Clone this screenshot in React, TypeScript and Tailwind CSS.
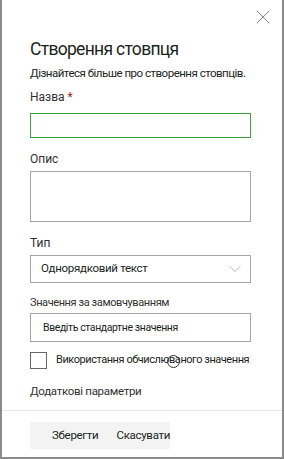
import { X, ChevronDown } from 'lucide-react'

const FONT = { fontFamily: 'Roboto, "Liberation Sans", Arial, sans-serif' }

export default function App() {
  return (
    <div
      className="w-[284px] h-[459px] bg-white border-l-2 border-r-2 border-b-2 border-[#8a8a8a] flex flex-col text-[#323130] whitespace-nowrap overflow-hidden"
      style={FONT}
    >
      <div className="flex justify-end pt-[5px] pr-[7px]">
        <X className="w-[24px] h-[24px] text-[#7a7a7a]" strokeWidth={0.9} />
      </div>

      <div className="pl-[28px] pr-[31px] flex flex-col">
        <h1 className="mt-[9px] text-[17.5px] leading-[22px] font-normal text-[#201f1e] tracking-[-0.7px]">
          Створення стовпця
        </h1>
        <p className="mt-[6px] text-[11.5px] leading-[14px] tracking-[-0.5px] text-[#201f1e]">
          Дізнайтеся більше про створення стовпців.
        </p>

        <label className="mt-[10px] text-[12px] leading-[15px]">
          Назва <span className="text-[#a4262c]">*</span>
        </label>
        <div className="mt-[8px] h-[25px] border border-[#3aa53e]" />

        <label className="mt-[14px] text-[12px] leading-[15px]">Опис</label>
        <div className="mt-[4px] h-[51px] border border-[#a6a6a6]" />

        <label className="mt-[14px] text-[12px] leading-[15px]">Тип</label>
        <div className="mt-[4px] h-[28px] border border-[#a6a6a6] flex items-center justify-between pl-[10px] pr-[5px]">
          <span className="text-[11.5px] tracking-[-0.3px] text-[#201f1e]">Однорядковий текст</span>
          <ChevronDown className="w-[20px] h-[20px] text-[#9a9a9a]" strokeWidth={0.9} />
        </div>

        <label className="mt-[12px] text-[11px] leading-[15px] tracking-[-0.4px]">
          Значення за замовчуванням
        </label>
        <div className="mt-[3px] h-[29px] border border-[#a6a6a6] flex items-center pl-[12px]">
          <span className="text-[10.5px] text-[#201f1e] tracking-[-0.4px]">Введіть стандартне значення</span>
        </div>

        <div className="mt-[10px] flex items-center gap-[9px] relative">
          <div className="w-[17px] h-[17px] border border-[#666] shrink-0" />
          <span className="text-[11px] tracking-[-0.45px] text-[#201f1e]">Використання обчислюваного значення</span>
          <div className="absolute left-[137px] top-[3px] w-[13px] h-[13px] rounded-full border border-[#333]" />
        </div>

        <p className="mt-[15px] text-[11.5px] leading-[15px] tracking-[-0.3px]">Додаткові параметри</p>
      </div>

      <div className="mt-[11px] border-t border-[#e6e6e6]" />

      <div className="pl-[28px] mt-[11px] flex">
        <div className="h-[27px] bg-[#f3f3f3] inline-flex items-center text-[11.5px] text-[#201f1e] tracking-[-0.3px] pl-[22px]">
          <span>Зберегти</span>
          <span className="ml-[18px]">Скасувати</span>
        </div>
      </div>
    </div>
  )
}
